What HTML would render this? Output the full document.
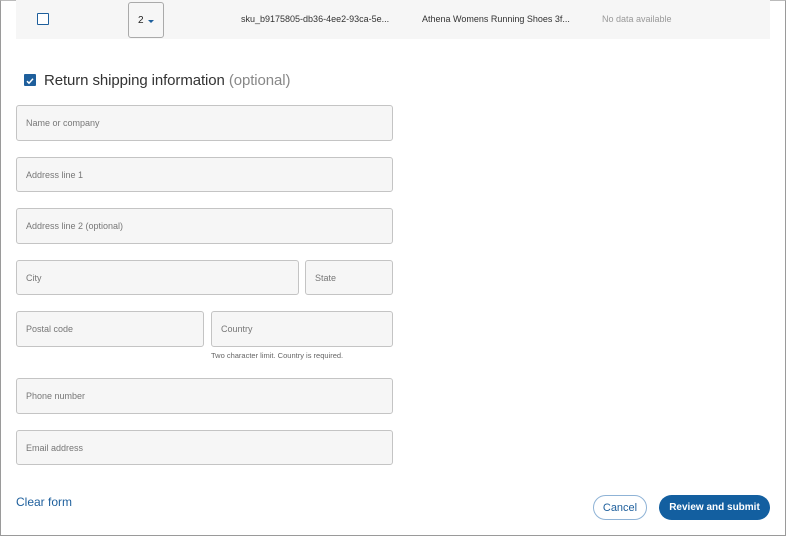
<!DOCTYPE html>
<html><head><style>
body{margin:0;width:786px;height:536px;position:relative;font-family:"Liberation Sans",sans-serif;background:#fff;overflow:hidden}
.frame{position:absolute;left:0;top:0;width:784px;height:534px;border:1px solid #9a9a9a;border-top:1px solid #bbb}
.band{position:absolute;left:16px;top:0;width:754px;height:39px;background:#f6f6f6}
.abs{position:absolute}
.in{position:absolute;background:#f6f6f6;border:1px solid #c4c4c4;border-radius:3px;box-sizing:border-box;font-size:9px;color:#777;padding-left:9px;display:flex;align-items:center}
.t{font-size:9px;color:#333;position:absolute;top:14px}
</style></head><body>
<div class="frame"></div>
<div class="band"></div>
<div class="abs" style="left:37px;top:13px;width:10px;height:10px;border:1.5px solid #1e5f9c;border-radius:1px;background:#fff"></div>
<div class="abs" style="left:128px;top:2px;width:34px;height:34px;border:1px solid #aaa;border-radius:3px;background:#f6f6f6;font-size:10px;color:#222"><span style="position:absolute;left:9px;top:12px">2</span><span style="position:absolute;left:19px;top:17px;border-left:3px solid transparent;border-right:3px solid transparent;border-top:3px solid #1e5f9c"></span></div>
<div class="t" style="left:241px">sku_b9175805-db36-4ee2-93ca-5e...</div>
<div class="t" style="left:422px">Athena Womens Running Shoes 3f...</div>
<div class="t" style="left:602px;color:#999">No data available</div>
<div class="abs" style="left:24px;top:74px;width:12px;height:12px;background:#1e5f9c;border-radius:1px"><svg width="12" height="12" viewBox="0 0 12 12"><path d="M3 6.2l2 2 4-4.4" stroke="#fff" stroke-width="1.5" fill="none"/></svg></div>
<div class="abs" style="left:44px;top:72px;font-size:15px;color:#333;letter-spacing:-0.1px">Return shipping information <span style="color:#888">(optional)</span></div>
<div class="in" style="left:16px;top:105px;width:377px;height:36px">Name or company</div>
<div class="in" style="left:16px;top:157px;width:377px;height:35px">Address line 1</div>
<div class="in" style="left:16px;top:208px;width:377px;height:36px">Address line 2 (optional)</div>
<div class="in" style="left:16px;top:260px;width:283px;height:35px">City</div>
<div class="in" style="left:305px;top:260px;width:88px;height:35px">State</div>
<div class="in" style="left:16px;top:311px;width:188px;height:36px">Postal code</div>
<div class="in" style="left:211px;top:311px;width:182px;height:36px">Country</div>
<div class="abs" style="left:211px;top:351px;font-size:7.5px;color:#666">Two character limit. Country is required.</div>
<div class="in" style="left:16px;top:378px;width:377px;height:36px">Phone number</div>
<div class="in" style="left:16px;top:430px;width:377px;height:35px">Email address</div>
<div class="abs" style="left:16px;top:495px;font-size:12px;color:#1e5f9c">Clear form</div>
<div class="abs" style="left:593px;top:495px;width:54px;height:25px;box-sizing:border-box;border:1px solid #8fb3d6;border-radius:13px;font-size:11px;color:#1e5f9c;display:flex;align-items:center;justify-content:center">Cancel</div>
<div class="abs" style="left:659px;top:495px;width:111px;height:25px;background:#135fa0;border-radius:13px;font-size:10px;font-weight:bold;color:#fff;display:flex;align-items:center;justify-content:center">Review and submit</div>
</body></html>
